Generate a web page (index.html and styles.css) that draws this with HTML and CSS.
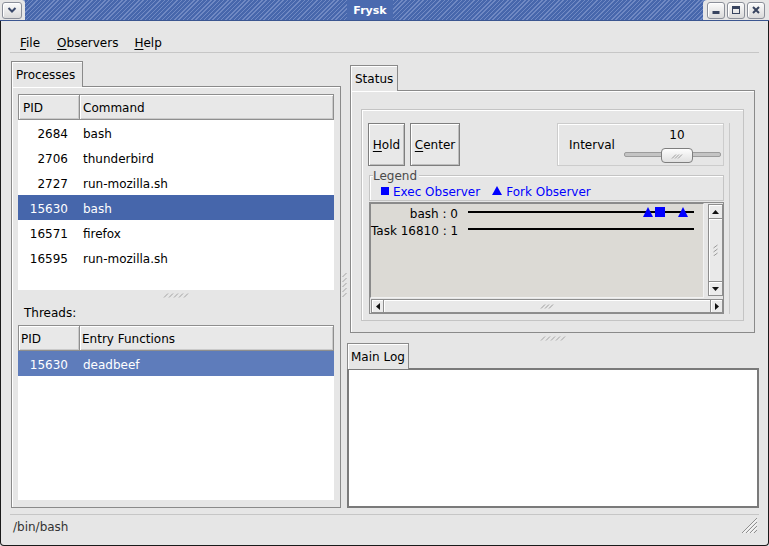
FILE: index.html
```html
<!DOCTYPE html>
<html>
<head>
<meta charset="utf-8">
<title>Frysk</title>
<link rel="stylesheet" href="styles.css">
</head>
<body>
<div class="window">
  <div class="titlebar">
    <div class="tb-left">
      <span class="tbtn tbtn-menu"><svg width="12" height="8" viewBox="0 0 12 8"><path d="M2.5 2l3.5 3.5 3.5-3.5" fill="none" stroke="#3b4a6b" stroke-width="2"/></svg></span>
    </div>
    <div class="tb-mid"><span class="tb-title">Frysk</span></div>
    <div class="tb-right">
      <span class="tbtn"><svg width="10" height="10" viewBox="0 0 10 10"><rect x="1.5" y="6" width="7" height="3" fill="#38445f"/></svg></span>
      <span class="tbtn"><svg width="10" height="10" viewBox="0 0 10 10"><rect x="1.5" y="1.5" width="7" height="7" fill="none" stroke="#38445f" stroke-width="1"/><rect x="1" y="1" width="8" height="3" fill="#38445f"/></svg></span>
      <span class="tbtn"><svg width="10" height="10" viewBox="0 0 10 10"><path d="M2 2l6 6M8 2l-6 6" stroke="#38445f" stroke-width="2"/></svg></span>
    </div>
  </div>
  <div class="body">
    <div class="menubar">
      <span class="menu menu-first"><u>F</u>ile</span>
      <span class="menu"><u>O</u>bservers</span>
      <span class="menu"><u>H</u>elp</span>
    </div>
    <div class="sep menu-sep"></div>
    <div class="content">
      <div class="leftcol">
        <div class="tab t-proc">Processes</div>
        <div class="nbframe lframe">
          <div class="tree t1">
            <div class="thead"><div class="th th-pid">PID</div><div class="th th-cmd">Command</div></div>
            <div class="tbody">
              <div class="tr"><span class="td td-pid">2684</span><span class="td td-cmd">bash</span></div>
              <div class="tr"><span class="td td-pid">2706</span><span class="td td-cmd">thunderbird</span></div>
              <div class="tr"><span class="td td-pid">2727</span><span class="td td-cmd">run-mozilla.sh</span></div>
              <div class="tr sel"><span class="td td-pid">15630</span><span class="td td-cmd">bash</span></div>
              <div class="tr"><span class="td td-pid">16571</span><span class="td td-cmd">firefox</span></div>
              <div class="tr"><span class="td td-pid">16595</span><span class="td td-cmd">run-mozilla.sh</span></div>
            </div>
          </div>
          <div class="hgrip"><svg width="26" height="5" viewBox="0 0 26 5"><path d="M1 4.5l4-4M6 4.5l4-4M11 4.5l4-4M16 4.5l4-4M21 4.5l4-4" stroke="#a2a2a2" stroke-width="1"/></svg></div>
          <div class="threads-label">Threads:</div>
          <div class="tree t2">
            <div class="thead"><div class="th th-pid th-alt">PID</div><div class="th th-cmd th-alt">Entry Functions</div></div>
            <div class="tbody">
              <div class="tr sel2"><span class="td td-pid">15630</span><span class="td td-cmd">deadbeef</span></div>
            </div>
          </div>
        </div>
      </div>
      <div class="vgrip"><svg width="5" height="26" viewBox="0 0 5 26"><path d="M0.5 5l4-4M0.5 10l4-4M0.5 15l4-4M0.5 20l4-4M0.5 25l4-4" stroke="#a2a2a2" stroke-width="1"/></svg></div>
      <div class="rightcol">
        <div class="tab t-status">Status</div>
        <div class="nbframe sframe">
          <div class="inner">
            <div class="ctl">
              <div class="toprow">
                <button class="btn b-hold"><u>H</u>old</button>
                <button class="btn b-center"><u>C</u>enter</button>
                <div class="interval">
                  <span class="int-label">Interval</span>
                  <div class="slider">
                    <div class="val">10</div>
                    <div class="trough">
                      <div class="thumb"><svg width="12" height="6" viewBox="0 0 12 6"><path d="M1 5.5l4-4M4 5.5l4-4M7 5.5l4-4" stroke="#9a9a9a" stroke-width="1"/></svg></div>
                    </div>
                  </div>
                </div>
              </div>
              <div class="legend">
                <span class="legend-title">Legend</span>
                <span class="lg-sq"></span><span class="lg-text lg-exec">Exec Observer</span>
                <svg class="lg-tri" width="10" height="9" viewBox="0 0 10 9"><polygon points="0,9 5,0 10,9" fill="#0000ff"/></svg><span class="lg-text">Fork Observer</span>
              </div>
              <div class="scrollwin">
                <div class="sw-row">
                  <div class="viewport">
                    <div class="grow">
                      <span class="glabel">bash : 0</span>
                      <div class="track">
                        <svg class="mk mk-1" width="10" height="10" viewBox="0 0 10 10"><polygon points="0,10 5,0 10,10" fill="#0000ff"/></svg>
                        <span class="mk mk-sq"></span>
                        <svg class="mk mk-2" width="10" height="10" viewBox="0 0 10 10"><polygon points="0,10 5,0 10,10" fill="#0000ff"/></svg>
                      </div>
                    </div>
                    <div class="grow">
                      <span class="glabel">Task 16810 : 1</span>
                      <div class="track"></div>
                    </div>
                  </div>
                  <div class="vscroll">
                    <div class="sb-btn"><svg width="7" height="4" viewBox="0 0 7 4"><polygon points="0,4 3.5,0 7,4" fill="#111"/></svg></div>
                    <div class="sb-thumb"><svg width="5" height="12" viewBox="0 0 5 12"><path d="M0.5 4l4-3M0.5 8l4-3M0.5 12l4-3" stroke="#9a9a9a" stroke-width="1"/></svg></div>
                    <div class="sb-btn"><svg width="7" height="4" viewBox="0 0 7 4"><polygon points="0,0 3.5,4 7,0" fill="#111"/></svg></div>
                  </div>
                </div>
                <div class="hscroll">
                  <div class="sb-btn"><svg width="4" height="7" viewBox="0 0 4 7"><polygon points="4,0 0,3.5 4,7" fill="#111"/></svg></div>
                  <div class="sb-thumb"><svg width="14" height="6" viewBox="0 0 14 6"><path d="M1 5.5l4-4M5 5.5l4-4M9 5.5l4-4" stroke="#9a9a9a" stroke-width="1"/></svg></div>
                  <div class="sb-btn"><svg width="4" height="7" viewBox="0 0 4 7"><polygon points="0,0 4,3.5 0,7" fill="#111"/></svg></div>
                </div>
              </div>
            </div>
            <div class="vline"></div>
          </div>
        </div>
        <div class="hgrip rgrip"><svg width="26" height="5" viewBox="0 0 26 5"><path d="M1 4.5l4-4M6 4.5l4-4M11 4.5l4-4M16 4.5l4-4M21 4.5l4-4" stroke="#a2a2a2" stroke-width="1"/></svg></div>
        <div class="tab t-log">Main Log</div>
        <div class="logframe"></div>
      </div>
    </div>
    <div class="statusbar">
      <div class="sep sb-sep"></div>
      <div class="sb-row">
        <span class="sb-text">/bin/bash</span>
        <svg class="resize" width="18" height="18" viewBox="0 0 18 18"><path d="M17 2L2 17M17 6L6 17M17 10L10 17M17 14L14 17" stroke="#8f8f8f" stroke-width="1"/><path d="M17 3.5L3.5 17M17 7.5L7.5 17M17 11.5L11.5 17" stroke="#ffffff" stroke-width="1"/></svg>
      </div>
    </div>
  </div>
</div>
</body>
</html>
```

FILE: styles.css
```css
* { box-sizing: border-box; }
html, body { margin: 0; padding: 0; }
body {
  width: 769px;
  height: 546px;
  overflow: hidden;
  background: #e6e6e6;
  font-family: "DejaVu Sans", "Liberation Sans", sans-serif;
  font-size: 12px;
  color: #000;
}
u { text-decoration: underline; text-underline-offset: 2px; }

.window { width: 769px; height: 546px; display: flex; flex-direction: column; }

/* title bar */
.titlebar {
  height: 21px;
  flex: none;
  display: flex;
  background: repeating-linear-gradient(135deg, #4767ac 0px, #4767ac 2px, #7089c3 2px, #7089c3 3px);
  border-bottom: 1px solid #3a5590;
}
.tb-left {
  width: 25px;
  background: #e6e6e6;
  border-top-right-radius: 3px;
  display: flex;
  align-items: center;
  padding-left: 2px;
}
.tb-mid {
  flex: 1;
  display: flex;
  justify-content: center;
  align-items: stretch;
  padding-left: 12px;
}
.tb-title {
  background: #4a6aaf;
  color: #fff;
  font-weight: bold;
  font-size: 11px;
  padding: 4px 6px 0 6px;
  line-height: 14px;
}
.tb-right {
  width: 66px;
  background: #e6e6e6;
  border-top-left-radius: 4px;
  display: flex;
  align-items: center;
  gap: 2px;
  padding-left: 4px;
}
.tbtn {
  width: 18px;
  height: 17px;
  border: 1px solid #8b8f99;
  border-radius: 3px;
  background: linear-gradient(#fbfbfb, #dadada);
  box-shadow: inset 1px 1px 0 #fff;
  display: flex;
  align-items: center;
  justify-content: center;
}
.tbtn-menu { width: 20px; }

/* window body */
.body {
  height: 525px;
  flex: none;
  display: flex;
  flex-direction: column;
  border: 1px solid #1a1a1a;
  border-top: none;
  border-radius: 0 0 4px 4px;
  background: #e6e6e6;
}
.menubar {
  height: 31px;
  flex: none;
  display: flex;
  align-items: flex-end;
  padding: 0 0 1px 11px;
}
.menu { padding: 0 8px; line-height: 15px; }
.menu-first { padding-right: 9px; }
.sep { height: 1px; background: #c6c6c6; flex: none; }
.menu-sep { margin: 0 9px; }

.content { height: 458px; flex: none; display: flex; }

/* tabs & notebook frames */
.tab {
  height: 26px;
  border: 1px solid #8a8a8a;
  border-bottom: none;
  background: #e6e6e6;
  box-shadow: inset 1px 1px 0 #fff;
  display: flex;
  align-items: center;
  padding-left: 4px;
  padding-top: 1px;
  margin-bottom: -1px;
  position: relative;
  z-index: 1;
  flex: none;
}
.nbframe {
  border: 1px solid #8a8a8a;
  box-shadow: inset 1px 1px 0 #fff;
}

/* left column */
.leftcol { width: 330px; margin-left: 10px; padding-top: 8px; display: flex; flex-direction: column; }
.t-proc { width: 72px; }
.lframe { height: 422px; padding: 7px 6px; display: flex; flex-direction: column; }

.tree { background: #fff; display: flex; flex-direction: column; }
.t1 { height: 196px; flex: none; }
.t2 { flex: 1; }
.thead { height: 26px; display: flex; background: #e6e6e6; flex: none; }
.th {
  border: 1px solid #8e8e8e;
  box-shadow: inset 1px 1px 0 #fff, inset -1px -1px 0 #cacaca;
  background: #e8e8e8;
  display: flex;
  align-items: center;
  padding-top: 1px;
}
.th-pid { width: 62px; padding-left: 4px; }
.th-cmd { flex: 1; border-left: none; padding-left: 3px; }
.th-pid.th-alt { padding-left: 2px; }
.th-cmd.th-alt { padding-left: 2px; }
.tbody { flex: 1; }
.tr { height: 25px; display: flex; align-items: center; padding-top: 2px; }
.td-pid { width: 62px; text-align: right; padding-right: 12px; }
.td-cmd { padding-left: 3px; }
.tr.sel { background: #4666ab; color: #fff; }
.tr.sel2 { background: #5e7cbb; color: #fff; }

.hgrip { height: 10px; display: flex; align-items: center; justify-content: center; flex: none; }
.hgrip svg { display: block; }
.threads-label { height: 25px; line-height: 25px; padding-left: 6px; padding-top: 1px; flex: none; }

.vgrip { width: 6px; display: flex; align-items: center; justify-content: center; padding-top: 6px; }
.vgrip svg { display: block; }

/* right column */
.rightcol { flex: 1; padding-top: 12px; display: flex; flex-direction: column; }
.t-status { width: 48px; margin-left: 3px; }
.sframe { height: 243px; margin: 0 13px 0 3px; padding: 18px 10px 11px 10px; display: flex; flex: none; }
.inner {
  flex: 1;
  border: 1px solid #c4c4c4;
  box-shadow: inset 1px 1px 0 #fff;
  padding: 13px 0 0 6px;
  display: flex;
  align-items: flex-start;
}
.ctl { width: 356px; }
.vline { margin-left: 5px; width: 1px; height: 191px; background: #c9c9c9; }

.toprow { display: flex; height: 43px; }
.btn {
  height: 43px;
  padding: 1px 0 0 0;
  margin: 0;
  font: inherit;
  color: #000;
  border: 1px solid #7e7e7e;
  background: #e8e8e8;
  box-shadow: inset 1px 1px 0 #fff, inset -1px -1px 0 #bdbdbd;
}
.b-hold { width: 37px; }
.b-center { width: 50px; margin-left: 5px; }

.interval {
  margin-left: auto;
  width: 167px;
  height: 43px;
  border: 1px solid #cccccc;
  box-shadow: inset 1px 1px 0 #fff;
  display: flex;
  align-items: center;
  padding-left: 11px;
  padding-top: 1px;
}
.slider { width: 97px; margin-left: auto; margin-right: 2px; align-self: stretch; padding-top: 3px; }
.val { margin-left: 37px; width: 32px; text-align: center; line-height: 14px; }
.trough {
  margin-top: 10px;
  height: 5px;
  border: 1px solid #9c9c9c;
  background: #c4c4c4;
  border-radius: 2px;
  position: relative;
}
.thumb {
  position: absolute;
  left: 36px;
  top: -5px;
  width: 32px;
  height: 15px;
  border: 1px solid #7e7e7e;
  border-radius: 4px;
  background: linear-gradient(#fdfdfd, #e0e0e0);
  display: flex;
  align-items: center;
  justify-content: center;
}
.thumb svg { display: block; }

.legend {
  position: relative;
  margin: 9px 0 0 1px;
  width: 355px;
  height: 26px;
  border: 1px solid #c4c4c4;
  box-shadow: inset 1px 1px 0 #fff;
  display: flex;
  align-items: center;
  padding: 8px 0 0 11px;
  color: #0000ff;
}
.legend-title {
  position: absolute;
  top: -7px;
  left: 3px;
  line-height: 14px;
  padding: 0 2px 0 0;
  background: #e6e6e6;
  color: #4a4a4a;
}
.lg-sq { width: 8px; height: 8px; background: #0000ff; margin-right: 4px; margin-top: -3px; }
.lg-exec { margin-right: 12px; }
.lg-tri { display: block; margin-right: 4px; margin-top: -3px; }
.lg-text { line-height: 14px; }

.scrollwin {
  margin: 1px 0 0 1px;
  width: 355px;
  height: 112px;
  border: 1px solid #8c8c8c;
  display: flex;
  flex-direction: column;
}
.sw-row { display: flex; height: 95px; }
.viewport {
  width: 334px;
  height: 95px;
  border: 1px solid;
  border-color: #8a8a8a #f2f2f2 #f2f2f2 #8a8a8a;
  background: #dcdad5;
  padding-top: 1px;
}
.grow { display: flex; height: 17px; align-items: center; }
.glabel { width: 87px; text-align: right; white-space: nowrap; }
.track { position: relative; margin-left: 10px; width: 226px; height: 17px; }
.track::before { content: ""; position: absolute; left: 0; right: 0; top: 6px; height: 2px; background: #000; }
.mk { position: absolute; top: 2px; display: block; }
.mk-1 { left: 175px; }
.mk-sq { left: 187px; width: 10px; height: 10px; background: #0000ff; }
.mk-2 { left: 210px; }

.vscroll { margin: 1px 0 0 4px; width: 15px; height: 92px; display: flex; flex-direction: column; }
.hscroll { margin: 1px 0 0 1px; width: 352px; height: 14px; display: flex; }
.sb-btn {
  border: 1px solid #8e8e8e;
  background: #ebebeb;
  box-shadow: inset 1px 1px 0 #fff;
  display: flex;
  align-items: center;
  justify-content: center;
  flex: none;
}
.vscroll .sb-btn { height: 15px; }
.hscroll .sb-btn { width: 13px; }
.sb-thumb {
  flex: 1;
  border: 1px solid #8e8e8e;
  background: #e9e9e9;
  box-shadow: inset 1px 1px 0 #fff;
  display: flex;
  align-items: center;
  justify-content: center;
}
.vscroll .sb-thumb { border-top: none; border-bottom: none; }
.hscroll .sb-thumb { border-left: none; border-right: none; }
.sb-btn svg, .sb-thumb svg { display: block; }

.rgrip { margin-right: 9px; }
.t-log { width: 62px; padding-left: 3px; }
.logframe { height: 140px; margin-right: 9px; border: 2px solid #7a7a7a; background: #fff; flex: none; }

/* status bar */
.statusbar { height: 34px; flex: none; display: flex; flex-direction: column; }
.sb-sep { margin: 3px 9px 0 9px; }
.sb-row { flex: 1; display: flex; align-items: flex-start; }
.sb-text { margin: 5px 0 0 12px; line-height: 14px; color: #333; }
.resize { display: block; margin: 1px 10px 0 auto; }
```
